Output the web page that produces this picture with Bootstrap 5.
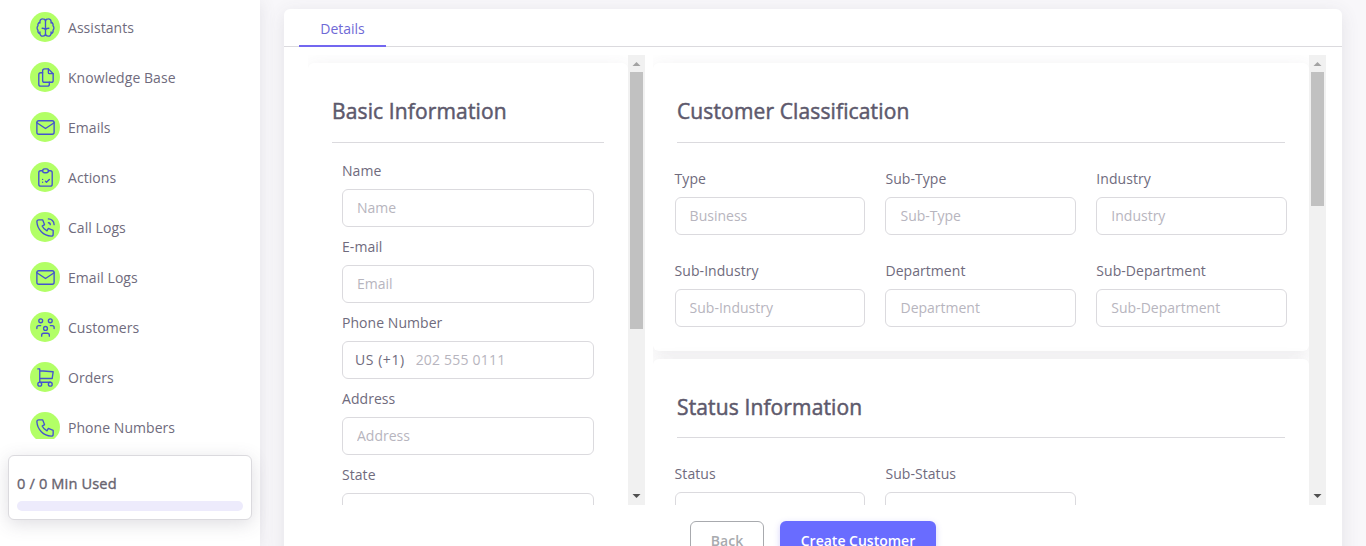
<!DOCTYPE html>
<html lang="en">
<head>
<meta charset="utf-8">
<meta name="viewport" content="width=device-width, initial-scale=1">
<title>Create Customer</title>
<link href="https://cdn.jsdelivr.net/npm/bootstrap@5.3.0/dist/css/bootstrap.min.css" rel="stylesheet">
<style>
  body { font-family: "Open Sans", "Noto Sans", sans-serif; font-size: 14px; line-height: 20px; color: #6f6b7d; background: #f8f7fa; }
  .sidebar { width: 260px; box-shadow: 0 2px 16px rgba(75,70,92,.12); z-index: 2; }
  .menu { height: 439px; padding-top: 2px; }
  .menu-row { height: 50px; padding-left: 30px; gap: 8px; color: #6f6b7d; }
  .menu-row > span:last-child { padding-top: 2px; letter-spacing: .05px; }
  .ico { width: 30px; height: 30px; border-radius: 50%; background: #b2ff66; color: #4453cf; }
  .ico svg { width: 23px; height: 23px; fill: none; stroke: currentColor; stroke-width: 1.4; stroke-linecap: round; stroke-linejoin: round; }
  .usage { margin: 16px 8px 0; height: 65px; padding: 17px 8px 0; border: 1px solid #dbdade; border-radius: 6px; box-shadow: 0 4px 18px rgba(75,70,92,.18); font-size: 14.600px; letter-spacing: .15px; -webkit-text-stroke: .35px currentColor; color: #67636f; }
  .usage .progress { height: 10px; margin-top: 8px; border-radius: 10px; background: #edebfc; }
  .sheet { margin: 9px 24px 0 24px; border-radius: 6px; background: #fff; box-shadow: 0 4px 18px rgba(75,70,92,.12); }
  .tabs { height: 38px; padding-left: 15px; border-bottom: 1px solid #dbdade; }
  .tabs a { width: 87px; height: 38px; line-height: 39px; color: #6f69d6; border-bottom: 2px solid #7367f0; }
  .panes { height: 450px; margin-top: 8px; }
  .pane-left { width: 337px; }
  .pane-right { width: 673px; }
  .block { background: #fff; border-radius: 6px; box-shadow: 0 4px 18px rgba(75,70,92,.1); padding: 32px 24px 0; margin-top: 8px; }
  .block h5 { font-size: 21px; line-height: 32px; font-weight: 400; letter-spacing: .13px; -webkit-text-stroke: .5px currentColor; color: #5d596c; padding-bottom: 15px; border-bottom: 1px solid #dbdade; margin: 0; }
  .block + .block h5 { padding-bottom: 14px; }
  .field label { display: block; height: 20px; margin-bottom: 8px; letter-spacing: .05px; }
  .form-control { height: 38px; padding: 0 14px 2px; font-size: 14px; border-color: #dbdade; border-radius: 6px; }
  .form-control::placeholder { color: #b7b5be; opacity: 1; }
  .stack { display: grid; row-gap: 10px; padding: 18px 10px 0; }
  .phone { border: 1px solid #dbdade; border-radius: 6px; height: 38px; padding-left: 12px; gap: 11px; }
  .phone span { letter-spacing: .55px; }
  .phone input { border: 0; padding: 0 0 1px; height: 34px; letter-spacing: .2px; }
  .grid3 { display: grid; grid-template-columns: repeat(3, 1fr); column-gap: 20px; row-gap: 26px; margin: 26px -2.200px 0 -2.400px; }
  .sbar { width: 17px; background: #f1f1f1; }
  .sbar svg { width: 17px; height: 17px; display: block; }
  .sbar .thumb { width: 13px; background: #c1c1c1; }
  .actions { padding: 16px 0 0 406px; gap: 16px; height: 78px; }
  .actions .btn { height: 38px; border-radius: 6px; font-size: 14px; font-weight: 600; padding: 0; }
  .btn-back { width: 74px; border: 1px solid #a8aaae; color: #a8aaae; }
  .btn-create { width: 156px; background: #696cff; color: #fff; box-shadow: 0 2px 6px rgba(115,103,240,.3); }
</style>
</head>
<body class="overflow-hidden vh-100">
<div class="d-flex vh-100 overflow-hidden">
  <aside class="sidebar bg-white flex-shrink-0 position-relative">
    <nav class="menu overflow-hidden">
      <a class="menu-row d-flex align-items-center text-decoration-none"><span class="ico d-flex align-items-center justify-content-center"><svg viewBox="0 0 24 24"><path d="M12 5v14M12 5.700A2.800 2.800 0 0 0 9.200 3A2.800 2.800 0 0 0 6.200 5.800v1.500M6.200 6.500a2.900 2.900 0 0 0-2 3.700a3.200 3.200 0 0 0 0 4.600a2.900 2.900 0 0 0 2 3.700M6.200 16.500v1.700a2.800 2.800 0 0 0 3 2.800a2.800 2.800 0 0 0 2.800-2.700M12 5.700A2.800 2.800 0 0 1 14.800 3a2.800 2.800 0 0 1 3 2.800v1.500M17.800 6.500a2.900 2.900 0 0 1 2 3.700a3.200 3.200 0 0 1 0 4.600a2.900 2.900 0 0 1-2 3.700M17.800 16.500v1.700a2.800 2.800 0 0 1-3 2.800a2.800 2.800 0 0 1-2.800-2.700M8.500 12.800q3 0 3.500 1.800q.5-1.800 3.500-1.800"/></svg></span><span>Assistants</span></a>
      <a class="menu-row d-flex align-items-center text-decoration-none"><span class="ico d-flex align-items-center justify-content-center"><svg viewBox="0 0 24 24"><path d="M15 3v4a1 1 0 0 0 1 1h4"/><path d="M18 17h-7a2 2 0 0 1-2-2V5a2 2 0 0 1 2-2h4l5 5v7a2 2 0 0 1-2 2"/><path d="M16 17v2a2 2 0 0 1-2 2H7a2 2 0 0 1-2-2V9a2 2 0 0 1 2-2h2"/></svg></span><span>Knowledge Base</span></a>
      <a class="menu-row d-flex align-items-center text-decoration-none"><span class="ico d-flex align-items-center justify-content-center"><svg viewBox="0 0 24 24"><rect x="3" y="5" width="18" height="14" rx="2"/><path d="M3 7l9 6l9-6"/></svg></span><span>Emails</span></a>
      <a class="menu-row d-flex align-items-center text-decoration-none"><span class="ico d-flex align-items-center justify-content-center"><svg viewBox="0 0 24 24"><path d="M9 5H7a2 2 0 0 0-2 2v12a2 2 0 0 0 2 2h10a2 2 0 0 0 2-2V7a2 2 0 0 0-2-2h-2"/><rect x="9" y="3" width="6" height="4" rx="2"/><path d="M9 14h.01M9 17h.01M12 16l1 1l3-3"/></svg></span><span>Actions</span></a>
      <a class="menu-row d-flex align-items-center text-decoration-none"><span class="ico d-flex align-items-center justify-content-center"><svg viewBox="0 0 24 24"><path d="M5 4h4l2 5l-2.500 1.500a11 11 0 0 0 5 5L15 13l5 2v4a2 2 0 0 1-2 2A16 16 0 0 1 3 6a2 2 0 0 1 2-2M15 7a2 2 0 0 1 2 2M15 3a6 6 0 0 1 6 6"/></svg></span><span>Call Logs</span></a>
      <a class="menu-row d-flex align-items-center text-decoration-none"><span class="ico d-flex align-items-center justify-content-center"><svg viewBox="0 0 24 24"><rect x="3" y="5" width="18" height="14" rx="2"/><path d="M3 7l9 6l9-6"/></svg></span><span>Email Logs</span></a>
      <a class="menu-row d-flex align-items-center text-decoration-none"><span class="ico d-flex align-items-center justify-content-center"><svg viewBox="0 0 24 24"><circle cx="12" cy="13" r="2"/><path d="M8 21v-1a2 2 0 0 1 2-2h4a2 2 0 0 1 2 2v1"/><circle cx="17" cy="5" r="2"/><path d="M17 10h2a2 2 0 0 1 2 2v1"/><circle cx="7" cy="5" r="2"/><path d="M3 13v-1a2 2 0 0 1 2-2h2"/></svg></span><span>Customers</span></a>
      <a class="menu-row d-flex align-items-center text-decoration-none"><span class="ico d-flex align-items-center justify-content-center"><svg viewBox="0 0 24 24"><circle cx="6" cy="19" r="2"/><circle cx="17" cy="19" r="2"/><path d="M17 17H6V3H4M6 5l14 1l-1 7H6"/></svg></span><span>Orders</span></a>
      <a class="menu-row d-flex align-items-center text-decoration-none"><span class="ico d-flex align-items-center justify-content-center"><svg viewBox="0 0 24 24"><path d="M5 4h4l2 5l-2.500 1.500a11 11 0 0 0 5 5L15 13l5 2v4a2 2 0 0 1-2 2A16 16 0 0 1 3 6a2 2 0 0 1 2-2"/></svg></span><span>Phone Numbers</span></a>
    </nav>
    <div class="usage bg-white">
      <div>0 / 0 Min Used</div>
      <div class="progress"></div>
    </div>
  </aside>

  <main class="flex-grow-1">
    <div class="sheet">
      <div class="tabs"><a class="d-block text-center text-decoration-none">Details</a></div>
      <div class="panes d-flex ps-4 pe-3 gap-2">
        <section class="pane-left d-flex overflow-hidden">
          <div class="flex-grow-1">
            <div class="block h-100">
              <h5>Basic Information</h5>
              <div class="stack">
                <div class="field"><label>Name</label><input class="form-control" placeholder="Name"></div>
                <div class="field"><label>E-mail</label><input class="form-control" placeholder="Email"></div>
                <div class="field"><label>Phone Number</label>
                  <div class="phone d-flex align-items-center"><span class="text-nowrap">US (+1)</span><input class="form-control shadow-none" placeholder="202 555 0111"></div></div>
                <div class="field"><label>Address</label><input class="form-control" placeholder="Address"></div>
                <div class="field"><label>State</label><input class="form-control"></div>
              </div>
            </div>
          </div>
          <div class="sbar d-flex flex-column align-items-center flex-shrink-0">
            <svg viewBox="0 0 17 17"><path d="M4.500 11L8.500 7L12.500 11z" fill="#a3a3a3"/></svg>
            <div class="thumb" style="height:257px"></div>
            <svg class="mt-auto" viewBox="0 0 17 17"><path d="M4.500 6L8.500 10L12.500 6z" fill="#505050"/></svg>
          </div>
        </section>
        <section class="pane-right d-flex overflow-hidden">
          <div class="flex-grow-1">
            <div class="block" style="height:288px">
              <h5>Customer Classification</h5>
              <div class="grid3">
                <div class="field"><label>Type</label><input class="form-control" placeholder="Business"></div>
                <div class="field"><label>Sub-Type</label><input class="form-control" placeholder="Sub-Type"></div>
                <div class="field"><label>Industry</label><input class="form-control" placeholder="Industry"></div>
                <div class="field"><label>Sub-Industry</label><input class="form-control" placeholder="Sub-Industry"></div>
                <div class="field"><label>Department</label><input class="form-control" placeholder="Department"></div>
                <div class="field"><label>Sub-Department</label><input class="form-control" placeholder="Sub-Department"></div>
              </div>
            </div>
            <div class="block" style="height:288px">
              <h5>Status Information</h5>
              <div class="grid3">
                <div class="field"><label>Status</label><input class="form-control"></div>
                <div class="field"><label>Sub-Status</label><input class="form-control"></div>
              </div>
            </div>
          </div>
          <div class="sbar d-flex flex-column align-items-center flex-shrink-0">
            <svg viewBox="0 0 17 17"><path d="M4.500 11L8.500 7L12.500 11z" fill="#a3a3a3"/></svg>
            <div class="thumb" style="height:134px"></div>
            <svg class="mt-auto" viewBox="0 0 17 17"><path d="M4.500 6L8.500 10L12.500 6z" fill="#505050"/></svg>
          </div>
        </section>
      </div>
      <div class="actions d-flex">
        <button class="btn btn-back flex-shrink-0">Back</button>
        <button class="btn btn-create flex-shrink-0">Create Customer</button>
      </div>
    </div>
  </main>
</div>
<script src="https://cdn.jsdelivr.net/npm/bootstrap@5.3.0/dist/js/bootstrap.bundle.min.js"></script>
</body>
</html>
